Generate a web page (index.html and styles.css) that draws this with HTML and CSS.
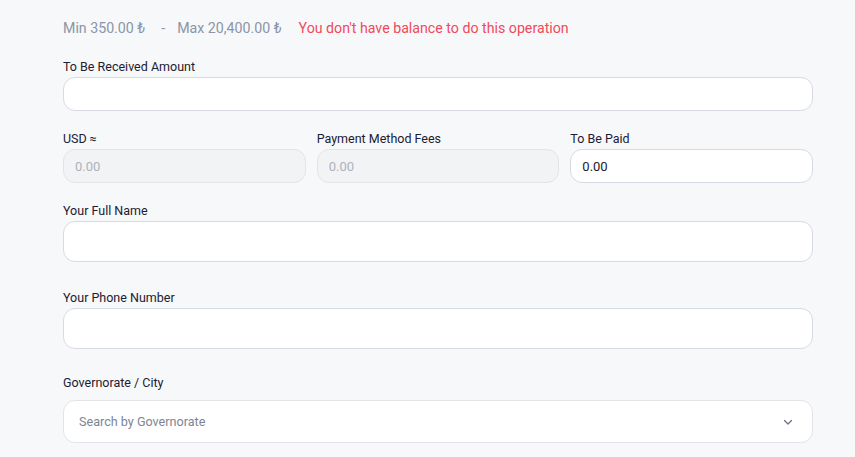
FILE: index.html
```html
<!DOCTYPE html>
<html lang="en">
<head>
<meta charset="utf-8">
<link rel="stylesheet" href="styles.css">
</head>
<body>
<main class="form">
  <div class="limits">
    <span class="limit limit-min">Min 350.00 ₺</span>
    <span class="dash">-</span>
    <span class="limit limit-max">Max 20,400.00 ₺</span>
    <span class="error">You don't have balance to do this operation</span>
  </div>

  <div class="field field-amount">
    <label class="label">To Be Received Amount</label>
    <input class="input input-sm" type="text">
  </div>

  <div class="row">
    <div class="field">
      <label class="label">USD ≈</label>
      <input class="input input-sm" type="text" placeholder="0.00" disabled>
    </div>
    <div class="field">
      <label class="label">Payment Method Fees</label>
      <input class="input input-sm" type="text" placeholder="0.00" disabled>
    </div>
    <div class="field">
      <label class="label">To Be Paid</label>
      <input class="input input-sm" type="text" value="0.00">
    </div>
  </div>

  <div class="field field-name">
    <label class="label">Your Full Name</label>
    <input class="input input-lg" type="text">
  </div>

  <div class="field field-phone">
    <label class="label">Your Phone Number</label>
    <input class="input input-lg" type="text">
  </div>

  <div class="field field-city">
    <label class="label">Governorate / City</label>
    <div class="select">
      <span class="select-placeholder">Search by Governorate</span>
      <svg class="chevron" width="12" height="12" viewBox="0 0 12 12" fill="none">
        <path d="M2.5 4.5 6 8l3.5-3.5" stroke="#6b7280" stroke-width="1.3" stroke-linecap="round" stroke-linejoin="round"/>
      </svg>
    </div>
  </div>
</main>
</body>
</html>
```

FILE: styles.css
```css
* { box-sizing: border-box; }

html, body {
  margin: 0;
  background: #f7f8fa;
}

body {
  font-family: Roboto, "Noto Sans", sans-serif;
  color: #1c2030;
}

.form {
  width: 750px;
  margin-left: 63px;
  padding-top: 18px;
}

/* min / max limits and balance warning */
.limits {
  display: flex;
  align-items: center;
  font-size: 14.2px;
  height: 20px;
  color: #8b95a5;
}

.dash { margin: 0 12px 0 16px; }

.limit-max { margin-right: 17px; }

.error { color: #f04a5a; }

.field {
  display: flex;
  flex-direction: column;
}

.label {
  font-size: 12.5px;
  line-height: 16px;
  margin-bottom: 2px;
  color: #1c2030;
}

.field-amount { margin-top: 21px; }

.row {
  display: grid;
  grid-template-columns: repeat(3, 1fr);
  column-gap: 11px;
  margin-top: 20px;
}

.field-name { margin-top: 20px; }
.field-phone { margin-top: 28px; }
.field-city { margin-top: 26px; }

.input {
  width: 100%;
  border: 1px solid #d7dae0;
  border-radius: 12px;
  background: #fff;
  font-family: inherit;
  font-size: 13px;
  color: #1c2030;
  padding: 0 11px;
  outline: none;
}

.input-sm { height: 34px; }
.input-lg { height: 41px; }

.input:disabled {
  background: #f2f3f5;
  border-color: #e2e4e8;
}

.input::placeholder { color: #adb2ba; }

.field-city .label { margin-bottom: 9px; }

/* governorate dropdown */
.select {
  height: 43px;
  border: 1px solid #e2e4e8;
  border-radius: 12px;
  background: #fff;
  display: flex;
  align-items: center;
  justify-content: space-between;
  padding: 0 18px 0 15px;
}

.select-placeholder {
  font-size: 12.6px;
  color: #7d8593;
}

.chevron { display: block; }
```
